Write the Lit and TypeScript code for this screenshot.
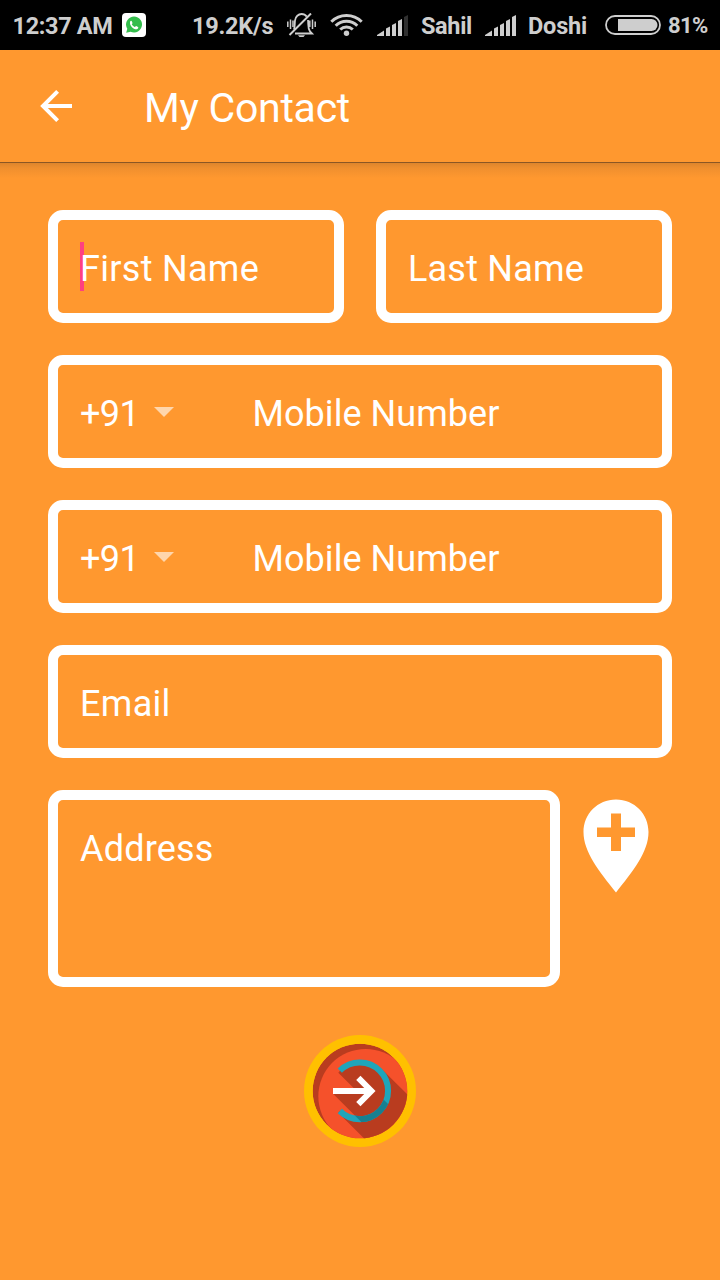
import { LitElement, html, css } from "lit";
import { customElement, property } from "lit/decorators.js";

@customElement("signal-bars")
class SignalBars extends LitElement {
  @property({ type: Boolean }) weak = false;

  static styles = css`
    :host { display: block; width: 31px; height: 21px; }
    svg { display: block; }
  `;

  render() {
    return html`<svg width="31" height="21" viewBox="0 0 31 21" fill="#cecece">
      <path d="M0 21V20L7 15.6V21Z" />
      <path d="M9 21V13.4L13 11.4V21Z" />
      <path d="M15 21V10L19 8V21Z" />
      <path d="M21 21V6L25 4V21Z" />
      <path d="M27 21V2L31 0V21Z" fill=${this.weak ? "#303030" : "#cecece"} />
    </svg>`;
  }
}

@customElement("status-bar")
class StatusBar extends LitElement {
  static styles = css`
    :host {
      display: flex;
      align-items: flex-start;
      box-sizing: border-box;
      height: 50px;
      background: #000;
      color: #cecece;
      font: 700 23.5px/28px Roboto, sans-serif;
      letter-spacing: -0.35px;
      padding: 12px 0 0 12.5px;
      white-space: nowrap;
    }
    span, svg, signal-bars { flex: none; display: block; }
    .time { width: 109.5px; }
    .chat { margin-top: 1px; }
    .speed { width: 95px; margin-left: 46px; letter-spacing: -0.25px; }
    .mute { margin-top: 1px; }
    .wifi { margin-left: 14px; margin-top: 1px; }
    .sig1 { margin: 3px 0 0 14px; }
    .name1 { margin-left: 13px; width: 64px; }
    .sig2 { margin-top: 3px; }
    .name2 { margin-left: 12px; width: 77px; letter-spacing: -0.2px; }
    .battery { margin-top: 3px; }
    .pct { margin-left: 7px; font-size: 22px; letter-spacing: -0.6px; }
  `;

  render() {
    return html`
      <span class="time">12:37 AM</span>
      <svg class="chat" width="24" height="24" viewBox="0 0 24 24">
        <rect width="24" height="24" rx="4" fill="#fff" />
        <path d="M4.200 19.800L5.300 15.800A8 8 0 1 1 8.600 18.700Z" fill="#34bd4c" />
        <path d="M8.100 8.400c.7-.9 1.400-.8 1.700-.1l.7 1.600c.1.5-.6 1-.7 1.400.7 1.300 1.600 2.100 3 2.700.5-.1.9-1.100 1.400-1l1.800.9c.7.4.1 1.600-.6 2.100-2.400 1.500-8.500-3.100-7.300-7.600Z" fill="#fff" />
      </svg>
      <span class="speed">19.2K/s</span>
      <svg class="mute" width="29" height="24" viewBox="0 0 29 24" fill="none" stroke="#cecece">
        <path d="M7 16.500C8 13 7.600 11 8 7.500C8.500 3.500 11.500 1 14.500 1C16.800 1 18.600 2 19.800 3.600M21 7C21.600 11.500 20.500 15 23 18.500L25 20.500H8" stroke-width="1.800" />
        <path d="M2.500 22L24 .5" stroke-width="2" />
        <path d="M.8 8.500V14M3.500 6.500V16M6 7.500V14M22.800 7.500V14M25.500 6.500V16M28.200 8.500V14" stroke-width="1.500" />
        <path d="M11 22.200H18L16.500 24H12.500Z" fill="#cecece" stroke="none" />
      </svg>
      <svg class="wifi" width="33" height="23" viewBox="0 0 33 23" fill="none" stroke="#cecece" stroke-width="3">
        <path d="M1.300 8.700A21.500 21.500 0 0 1 31.700 8.700" />
        <path d="M5.700 12.700A15.300 15.300 0 0 1 27.300 12.700" />
        <path d="M10.200 16.500A9.200 9.200 0 0 1 22.800 16.500" />
        <circle cx="16.500" cy="20.200" r="2.700" fill="#cecece" stroke="none" />
      </svg>
      <signal-bars class="sig1" weak></signal-bars>
      <span class="name1">Sahil</span>
      <signal-bars class="sig2"></signal-bars>
      <span class="name2">Doshi</span>
      <svg class="battery" width="56" height="20" viewBox="0 0 56 20">
        <rect x="1" y="1" width="54" height="18" rx="9" fill="none" stroke="#cecece" stroke-width="1.800" />
        <path d="M13 4H46.500A6 6 0 0 1 46.500 16H13Z" fill="#cecece" />
      </svg>
      <span class="pct">81%</span>
    `;
  }
}

@customElement("app-root")
class AppRoot extends LitElement {
  static styles = css`
    :host {
      display: block;
      width: 720px;
      height: 1280px;
      overflow: hidden;
      background: #ff982f;
      color: #fff;
      font: 400 36px/42px Roboto, sans-serif;
      white-space: nowrap;
    }
    .toolbar {
      display: flex;
      align-items: center;
      box-sizing: border-box;
      height: 112px;
      padding-left: 40px;
    }
    .title {
      margin: 4px 0 0 72px;
      font-size: 41px;
      line-height: 48px;
      letter-spacing: -0.27px;
    }
    .shade {
      height: 16px;
      background: linear-gradient(#8c5724 0 1px, #de852c 1px, #f08f2e 6px, #ff982f);
    }
    .form {
      display: flex;
      flex-direction: column;
      gap: 32px;
      padding: 32px 48px 0;
    }
    .row { display: flex; gap: 32px; }
    .field {
      display: flex;
      flex: 1;
      box-sizing: border-box;
      height: 113px;
      border: 10px solid #fff;
      border-radius: 15px;
      padding: 28px 0 0 22px;
      letter-spacing: 0.2px;
    }
    .solo { flex: none; }
    .address { flex: none; width: 512px; height: 197px; }
    .caret { width: 4px; height: 49px; margin: -6px -4px 0 0; background: #ff4081; }
    .hint { position: relative; letter-spacing: 0.3px; }
    .code { width: 74px; letter-spacing: -0.6px; }
    .drop { margin-top: 14px; }
    .number { margin-left: 78.5px; letter-spacing: 0.05px; }
    .pin { margin: 9px 0 0 -9px; }
    .go { display: block; margin: 48px auto 0; }
    svg { display: block; flex: none; }
  `;

  private phone() {
    return html`<div class="field solo">
      <span class="code">+91</span>
      <svg class="drop" width="20" height="10" viewBox="0 0 20 10"><path d="M0 0H20L10 10Z" fill="#ffd6ac" /></svg>
      <span class="number">Mobile Number</span>
    </div>`;
  }

  render() {
    return html`
      <status-bar></status-bar>
      <div class="toolbar">
        <svg width="32" height="32" viewBox="0 0 32 32" fill="none" stroke="#fff" stroke-width="4">
          <path d="M32 16H4M17.600 1.400L3 16L17.600 30.600" />
        </svg>
        <span class="title">My Contact</span>
      </div>
      <div class="shade"></div>
      <div class="form">
        <div class="row">
          <div class="field"><div class="caret"></div><span class="hint">First Name</span></div>
          <div class="field"><span>Last Name</span></div>
        </div>
        ${this.phone()} ${this.phone()}
        <div class="field solo"><span class="hint">Email</span></div>
        <div class="row">
          <div class="field address"><span>Address</span></div>
          <svg class="pin" width="66" height="94" viewBox="0 0 66 94">
            <path d="M33 0.500C51.500 0.500 65.500 15 65.500 33C65.500 53 50 72 33 93.500C16 72 .5 53 .5 33C.5 15 14.500 .5 33 .5Z" fill="#fff" />
            <path d="M28 14.500H38V28.500H52V38H38V52H28V38H14V28.500H28Z" fill="#ff982f" />
          </svg>
        </div>
      </div>
      <svg class="go" width="112" height="112" viewBox="27 30 336 336">
        <defs>
          <clipPath id="disc"><circle cx="195" cy="198" r="142" /></clipPath>
          <clipPath id="cast"><path d="M115 207L240 198L400 358V492Z" /></clipPath>
        </defs>
        <circle cx="195" cy="198" r="168" fill="#ffc000" />
        <g clip-path="url(#disc)">
          <circle cx="195" cy="198" r="142" fill="#b93c1f" />
          <circle cx="212" cy="214" r="142" fill="#f5512b" />
          <path d="M130 143L185 198H115V207L190 282A85 85 0 0 1 135 257L130 263L230 363H390V260L260 132A85 85 0 0 0 135 137Z" fill="#b93c1f" />
        </g>
        <path d="M134.500 137A85 85 0 1 1 134.500 258" fill="none" stroke="#1fa5ba" stroke-width="18" />
        <path d="M134.500 137A85 85 0 1 1 134.500 258" fill="none" stroke="#177f90" stroke-width="18" clip-path="url(#cast)" />
        <path d="M114 198H230M190 158.500L229 198L190 237.500" fill="none" stroke="#fff" stroke-width="18" />
      </svg>
    `;
  }
}
